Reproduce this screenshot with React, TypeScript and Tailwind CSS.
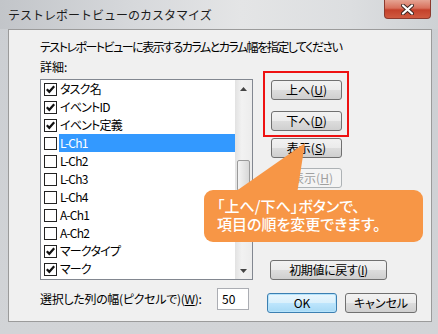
import React from "react";

const rows: { label: string; checked: boolean; selected?: boolean }[] = [
  { label: "タスク名", checked: true },
  { label: "イベントID", checked: true },
  { label: "イベント定義", checked: true },
  { label: "L-Ch1", checked: false, selected: true },
  { label: "L-Ch2", checked: false },
  { label: "L-Ch3", checked: false },
  { label: "L-Ch4", checked: false },
  { label: "A-Ch1", checked: false },
  { label: "A-Ch2", checked: false },
  { label: "マークタイプ", checked: true },
  { label: "マーク", checked: true },
];

const btn =
  "flex items-center justify-center h-[20px] rounded-[3px] border border-[#707070] bg-[linear-gradient(180deg,#f2f2f2_0%,#ebebeb_50%,#dddddd_50%,#cfcfcf_100%)] text-[12px] leading-none text-black";

function CheckBox({ checked }: { checked: boolean }) {
  return (
    <div className="flex h-[13px] w-[13px] shrink-0 items-center justify-center border border-[#222] bg-white">
      {checked && (
        <svg width="11" height="11" viewBox="0 0 11 11">
          <path d="M1.8 5.2 L4.3 7.8 L9.2 2.2" fill="none" stroke="#111" strokeWidth="2.2" />
        </svg>
      )}
    </div>
  );
}

export default function App() {
  return (
    <div className="relative h-[334px] w-[438px] overflow-hidden bg-[linear-gradient(180deg,#cbced2,#d2d4d7)] font-['Noto_Sans_CJK_JP',sans-serif] text-[12px] text-black [font-feature-settings:'palt']">
      {/* title bar */}
      <div className="flex h-[29px] items-start bg-[linear-gradient(90deg,#c2c5c9_0%,#d6d8db_30%,#e4e5e6_55%,#dcdee0_80%,#ced1d4_100%)]">
        <div className="pl-[8px] pt-[7px] text-[12px] leading-[16px] text-[#1b1b1b] [font-feature-settings:normal]">
          テストレポートビューのカスタマイズ
        </div>
        <div className="ml-auto mr-[7px] flex h-[19px] w-[47px] items-center justify-center rounded-b-[4px] border border-t-0 border-[#8c3a2e] bg-[linear-gradient(180deg,#e5a493_0%,#d8705c_45%,#c4412b_55%,#cf5a40_100%)]">
          <svg width="13" height="11" viewBox="0 0 13 11">
            <path d="M2 1.5 L11 9.5 M11 1.5 L2 9.5" stroke="#3a2420" strokeWidth="4" strokeLinecap="round" />
            <path d="M2 1.5 L11 9.5 M11 1.5 L2 9.5" stroke="#ffffff" strokeWidth="2.2" strokeLinecap="round" />
          </svg>
        </div>
      </div>

      {/* client area */}
      <div className="ml-[8px] mr-[6px] flex h-[293px] flex-col border border-[#9b9b9b] bg-[#f0f0f0] pl-[31px] pt-[9px]">
        <div className="h-[16px] leading-[16px] tracking-[-1.5px]">テストレポートビューに表示するカラムとカラム幅を指定してください</div>

        <div className="mt-[4px] flex">
          {/* left column */}
          <div className="flex flex-col">
            <div className="h-[16px] leading-[16px]">詳細:</div>
            <div className="mt-[4px] flex h-[201px] w-[213px] border border-[#828790] bg-white">
              <div className="flex flex-1 flex-col">
                {rows.map((r) => (
                  <div key={r.label} className="flex h-[18px] items-center pl-[3px]">
                    <CheckBox checked={r.checked} />
                    <div
                      className={
                        "ml-[2px] flex h-[18px] flex-1 items-center pl-[1px] leading-none tracking-[-0.8px] " +
                        (r.selected ? "bg-[#3399ff] text-white" : "")
                      }
                    >
                      {r.label}
                    </div>
                  </div>
                ))}
              </div>
              {/* scrollbar */}
              <div className="flex w-[17px] flex-col bg-[linear-gradient(90deg,#e2e2e2,#f2f2f2_40%,#ececec)]">
                <div className="flex h-[17px] items-center justify-center">
                  <svg width="7" height="4" viewBox="0 0 7 4">
                    <path d="M0 4 L3.5 0 L7 4 Z" fill="#444" />
                  </svg>
                </div>
                <div className="mt-[63px] ml-[2px] h-[31px] w-[13px] rounded-[2px] border border-[#9a9a9a] bg-[linear-gradient(90deg,#f4f4f4,#e6e6e6_50%,#d8d8d8)]" />
                <div className="mt-auto flex h-[17px] items-center justify-center">
                  <svg width="7" height="4" viewBox="0 0 7 4">
                    <path d="M0 0 L3.5 4 L7 0 Z" fill="#444" />
                  </svg>
                </div>
              </div>
            </div>
          </div>

          {/* right column */}
          <div className="ml-[10px] mt-[12px] flex flex-col">
            <div className="flex h-[66px] w-[86px] flex-col border-2 border-[#ee1111] pl-[6px] pt-[7px]">
              <div className={btn + " w-[71px]"}>
                上へ(<u>U</u>)
              </div>
              <div className={btn + " mt-[11px] w-[71px]"}>
                下へ(<u>D</u>)
              </div>
            </div>
            <div className={btn + " ml-[8px] mt-[1px] w-[71px]"}>
              表示(<u>S</u>)
            </div>
            <div className="ml-[8px] mt-[10px] flex h-[20px] w-[71px] items-center justify-center rounded-[3px] border border-[#adb2b5] bg-[#f4f4f4] text-[12px] leading-none text-[#a0a0a0]">
              非表示(<u>H</u>)
            </div>
            <div className={btn + " ml-[7px] mt-auto w-[117px] tracking-[-0.4px]"}>
              初期値に戻す(<u>I</u>)
            </div>
          </div>
        </div>

        {/* bottom row */}
        <div className="mt-[8px] flex items-start">
          <div className="mt-[3px] w-[177px] leading-[16px] tracking-[-0.3px]">
            選択した列の幅(ピクセルで)(<u>W</u>):
          </div>
          <div className="h-[22px] w-[32px] border border-[#abadb3] bg-white pl-[4px] pt-[2px] leading-[16px]">50</div>
          <div className="ml-[18px] mt-[5px] flex h-[20px] w-[70px] items-center justify-center rounded-[3px] border border-[#3c7fb1] bg-[linear-gradient(180deg,#eaf6fd_0%,#d9f0fc_50%,#bee6fd_50%,#a7d9f5_100%)] text-[12px] leading-none shadow-[inset_0_0_0_1px_#b6e3fb]">
            OK
          </div>
          <div className={btn + " ml-[8px] mt-[5px] w-[72px]"}>キャンセル</div>
        </div>
      </div>

      {/* callout */}
      <svg className="absolute left-[230px] top-[140px]" width="80" height="56" viewBox="0 0 80 56">
        <polygon points="75,3 2,54 67,54" fill="#f79646" />
      </svg>
      <div className="absolute left-[204px] top-[190px] h-[52px] w-[219px] rounded-[9px] bg-[#f79646] pl-[13px] pt-[7px] text-[15px] font-medium leading-[18px] text-white">
        <div>「上へ/下へ」ボタンで、</div>
        <div>項目の順を変更できます。</div>
      </div>
    </div>
  );
}
